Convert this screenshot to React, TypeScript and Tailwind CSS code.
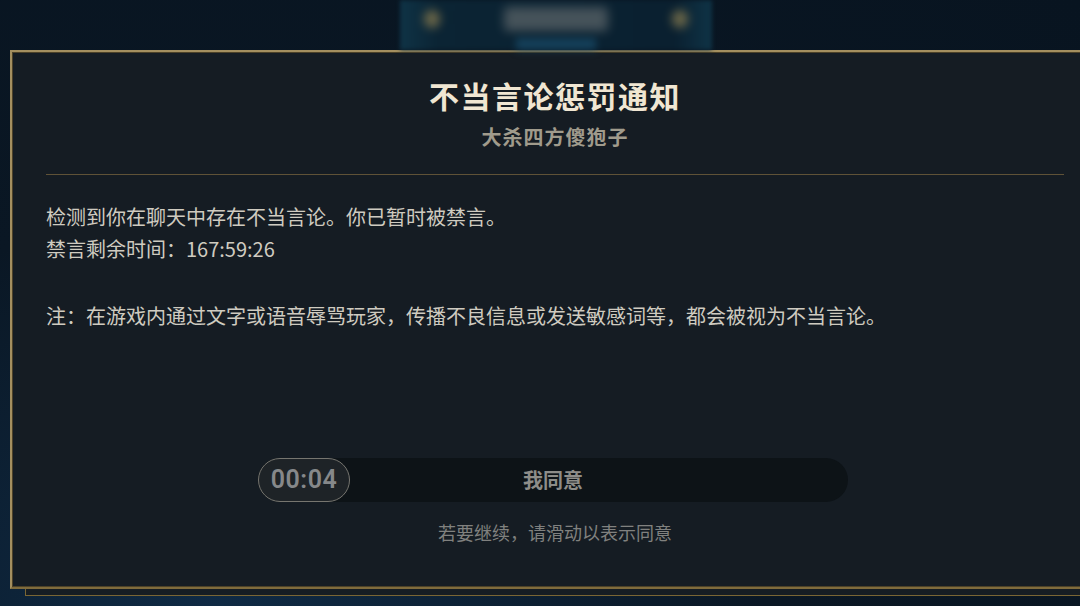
export default function App() {
  return (
    <div
      className="w-[1080px] h-[606px] overflow-hidden bg-[#0a1724] bg-[radial-gradient(ellipse_at_20%_100%,#0f2a44_0%,#0a1724_45%,#081420_100%)]"
      style={{ fontFamily: '"Noto Sans CJK SC", "Noto Sans", sans-serif' }}
    >
      {/* blurred lobby header behind the dialog */}
      <div className="h-[50px] pl-[400px] flex">
        <div className="w-[312px] h-[50px] flex flex-col items-center bg-[linear-gradient(90deg,#0f3346_0%,#0b2434_12%,#0a2030_88%,#0f3346_100%)] blur-[2px]">
          <div className="w-full h-[38px] flex items-center justify-between px-[24px]">
            <div className="w-[16px] h-[18px] rounded-full bg-[#6a6648] blur-[4px]" />
            <div className="w-[104px] h-[24px] rounded bg-[#46535a] blur-[5px]" />
            <div className="w-[16px] h-[18px] rounded-full bg-[#6a6648] blur-[4px]" />
          </div>
          <div className="w-[80px] h-[12px] bg-[#15405a] blur-[3px]" />
        </div>
      </div>

      {/* dialog */}
      <div className="ml-[10px] w-[1100px] h-[539px] bg-[#151c23] border-2 border-[#a48f5f] border-b-[#7f6b3c] shadow-[inset_0_0_0_1px_#4c4128,15px_7px_0_-1px_#161d23,15px_7px_0_0_#7a6634]">
        <div className="ml-[34px] w-[1018px] flex flex-col">
          <div className="pt-[25px] text-center text-[30px] leading-[36px] font-bold tracking-[1.5px] text-[#f0e6d2]">
            不当言论惩罚通知
          </div>
          <div className="mt-[10px] text-center text-[20px] leading-[28px] font-bold tracking-[1px] text-[#a09b8c]">
            大杀四方傻狍子
          </div>
          <div className="mt-[23px] h-px bg-[#5f5237]" />

          <div className="mt-[26px] text-[20px] leading-[32px] text-[#cfcbc0]">
            <p>检测到你在聊天中存在不当言论。你已暂时被禁言。</p>
            <p>禁言剩余时间：167:59:26</p>
          </div>
          <p className="mt-[35px] text-[20px] leading-[32px] text-[#cfcbc0]">
            注：在游戏内通过文字或语音辱骂玩家，传播不良信息或发送敏感词等，都会被视为不当言论。
          </p>

          {/* slide to agree */}
          <div className="mt-[126px] ml-[212px] w-[590px] h-[44px] rounded-full bg-[#0d1317] flex items-center">
            <div
              className="w-[92px] h-[44px] shrink-0 rounded-full border-[1.5px] border-[#76756f] bg-[#1e2327] flex items-center justify-center text-[25px] font-semibold tracking-[0.5px] text-[#86888a]"
              style={{ fontFamily: 'Roboto, "Noto Sans", sans-serif' }}
            >
              00:04
            </div>
            <div className="flex-1 pr-[92px] text-center text-[20px] font-bold text-[#8d8d89]">我同意</div>
          </div>
          <p className="mt-[18px] text-center text-[18px] leading-[24px] text-[#80817f]">
            若要继续，请滑动以表示同意
          </p>
        </div>
      </div>
    </div>
  );
}
